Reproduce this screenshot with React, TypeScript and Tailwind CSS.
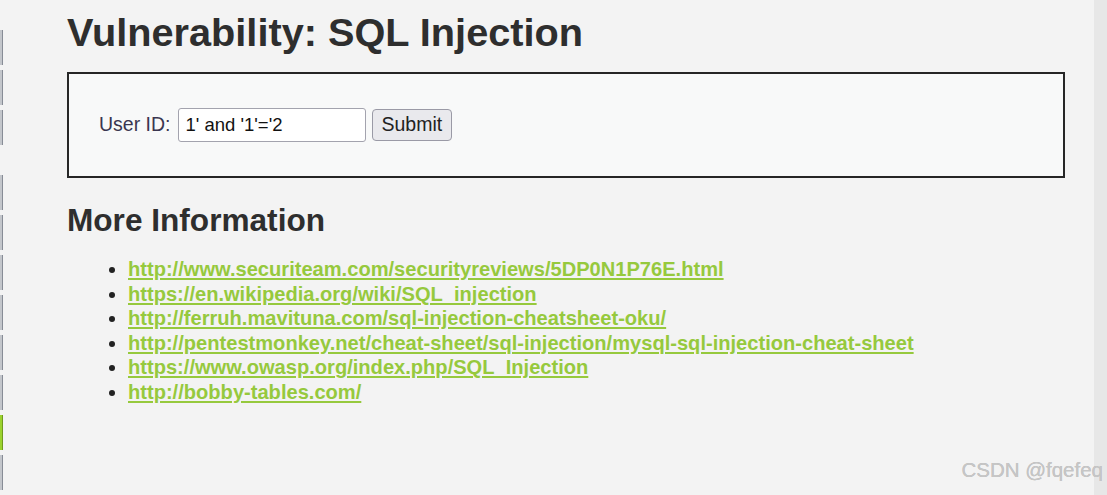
const links = [
  "http://www.securiteam.com/securityreviews/5DP0N1P76E.html",
  "https://en.wikipedia.org/wiki/SQL_injection",
  "http://ferruh.mavituna.com/sql-injection-cheatsheet-oku/",
  "http://pentestmonkey.net/cheat-sheet/sql-injection/mysql-sql-injection-cheat-sheet",
  "https://www.owasp.org/index.php/SQL_Injection",
  "http://bobby-tables.com/",
];

const Segment = ({ active }: { active?: boolean }) => (
  <div
    className={
      active
        ? "h-[35px] w-[3px] border-r border-[#6f9a1e] bg-[#9bd22e]"
        : "h-[35px] w-[3px] border-r border-[#878c96] bg-[#c3c6cb]"
    }
  />
);

export default function App() {
  return (
    <div className="relative flex h-[495px] w-full overflow-hidden bg-[#f3f3f3] font-['Liberation_Sans',Arial,sans-serif] text-[#333]">
      <div className="flex w-[4px] shrink-0 flex-col">
        <div className="mt-[30px] flex flex-col gap-[5px]">
          <Segment />
          <Segment />
          <Segment />
        </div>
        <div className="mt-[30px] flex flex-col gap-[5px]">
          <Segment />
          <Segment />
          <Segment />
          <Segment />
          <Segment />
          <Segment />
          <Segment active />
          <Segment />
          <Segment />
        </div>
      </div>

      <main className="flex-1 pl-[63px] pr-[29px]">
        <h1 className="mt-[13px] text-[39.7px] font-bold leading-none text-[#2e2e2e]">
          Vulnerability: SQL Injection
        </h1>

        <div className="mt-[19px] flex h-[106px] items-center border-2 border-[#262626] bg-[#f8f9f9] pl-[30px]">
          <label className="text-[19.5px] text-[#3a3650]">User ID:</label>
          <input
            readOnly
            value="1' and '1'='2"
            className="ml-[7px] h-[34px] w-[188px] rounded-[3px] border border-[#a3a3ae] bg-white pl-[7px] text-[18.5px] text-[#111] outline-none"
          />
          <button className="ml-[6px] h-[32px] rounded-[4px] border border-[#9a9aa6] bg-[#e9e9ed] px-[9px] text-[19.5px] text-[#222]">
            Submit
          </button>
        </div>

        <h2 className="mt-[27px] text-[31.6px] font-bold leading-none text-[#2e2e2e]">
          More Information
        </h2>

        <ul className="mt-[21px] list-disc pl-[61px] text-[20.1px] font-bold leading-[24.5px] marker:text-[#222]">
          {links.map((href) => (
            <li key={href}>
              <a href={href} className="text-[#96c93d] underline underline-offset-[2px]">
                {href}
              </a>
            </li>
          ))}
        </ul>
      </main>

      <div className="w-[13px] shrink-0 bg-[#e7e7e7]" />

      <div className="absolute bottom-[9px] right-[4px] text-[20.5px] text-[#c6c6c6] [text-shadow:0_0_0.5px_#b0b0b0]">
        CSDN @fqefeq
      </div>
    </div>
  );
}
